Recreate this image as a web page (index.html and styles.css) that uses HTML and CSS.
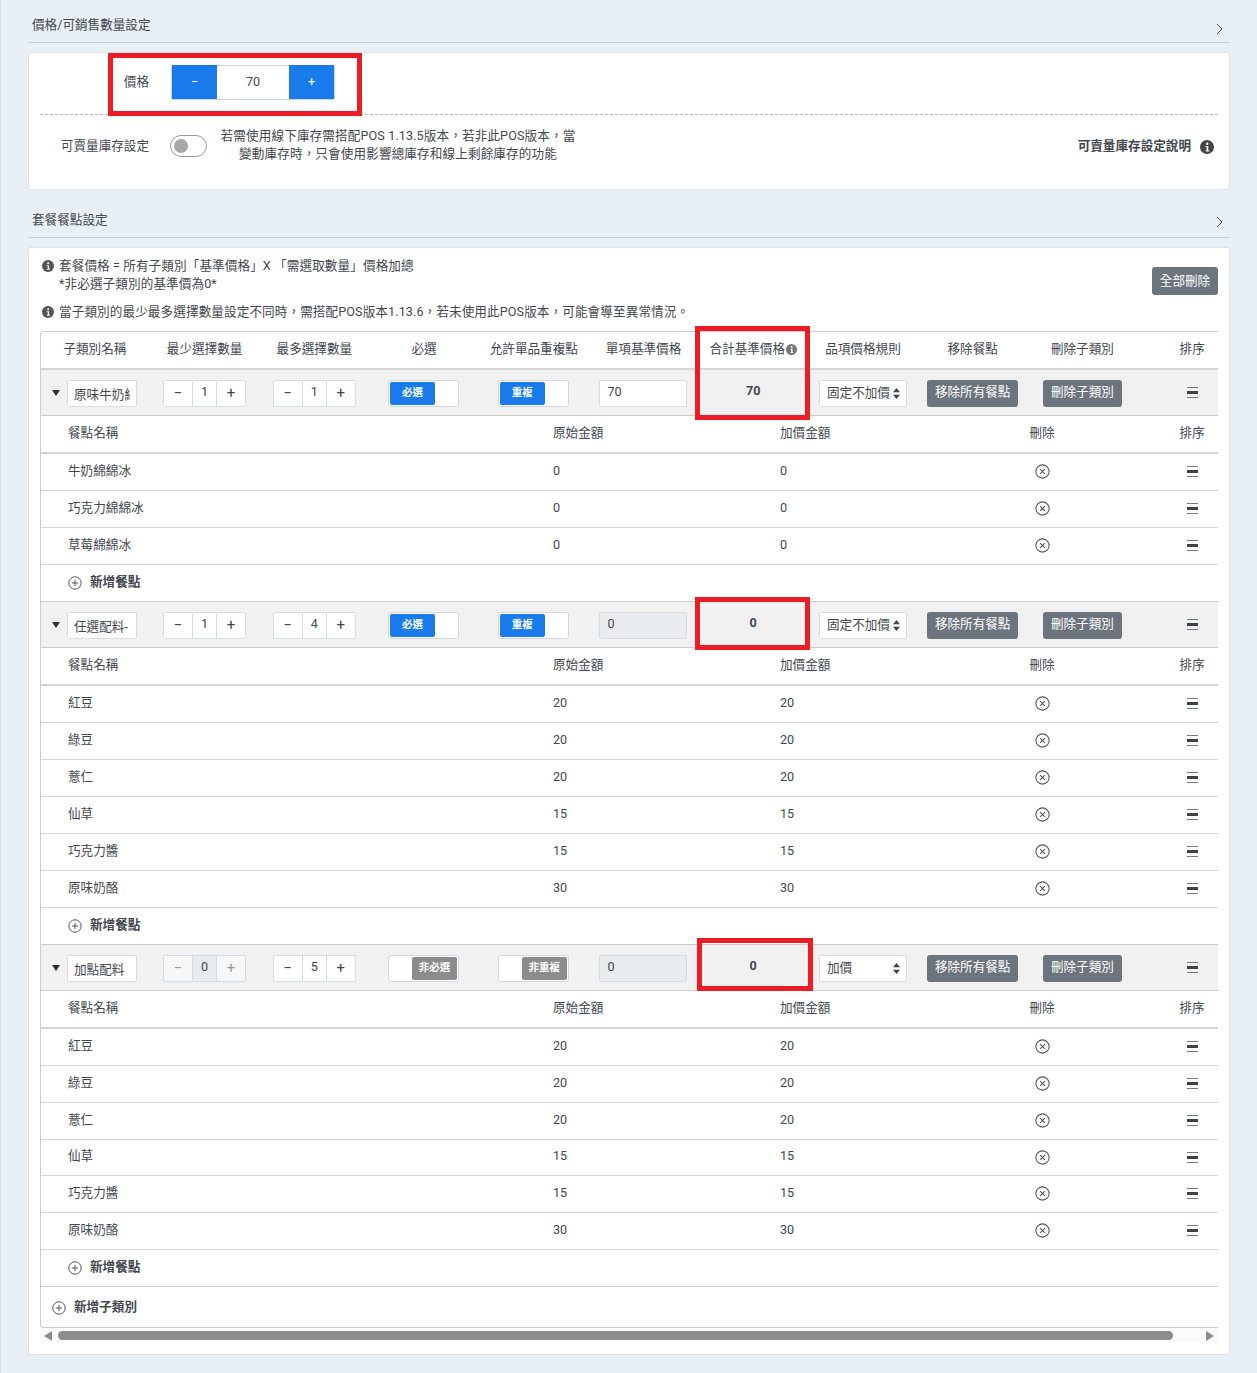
FILE: index.html
```html
<!DOCTYPE html>
<html lang="zh-Hant">
<head>
    <meta charset="UTF-8">
    <title>套餐設定</title>
    <link rel="stylesheet" href="styles.css">
</head>
<body>
    <svg class="icon-defs" aria-hidden="true">
        <symbol id="i-info" viewBox="0 0 14 14">
            <circle cx="7" cy="7" r="7" fill="currentColor"/>
            <circle cx="7.2" cy="3.7" r="1.2" fill="#fff"/>
            <path d="M5.6 6h2.7v4.4h1v1H5.6v-1h1V7h-1z" fill="#fff"/>
        </symbol>
        <symbol id="i-chevron" viewBox="0 0 7 12">
            <path d="M1 1l5 5-5 5" fill="none" stroke="currentColor" stroke-width="1"/>
        </symbol>
        <symbol id="i-remove" viewBox="0 0 14 14">
            <circle cx="7" cy="7" r="6.2" fill="none" stroke="currentColor" stroke-width="1"/>
            <path d="M4.8 4.8l4.4 4.4M9.2 4.8l-4.4 4.4" fill="none" stroke="currentColor" stroke-width="1"/>
        </symbol>
        <symbol id="i-add" viewBox="0 0 14 14">
            <circle cx="7" cy="7" r="6.2" fill="none" stroke="currentColor" stroke-width="1"/>
            <path d="M7 3.8v6.4M3.8 7h6.4" fill="none" stroke="currentColor" stroke-width="1"/>
        </symbol>
        <symbol id="i-sort" viewBox="0 0 11 11">
            <path d="M0 .5h11M0 10.5h11" fill="none" stroke="currentColor" stroke-width="1" opacity=".7"/>
            <path d="M0 4h11v3H0z" fill="currentColor"/>
        </symbol>
        <symbol id="i-updown" viewBox="0 0 7 11">
            <path d="M3.5 0L7 4.2H0zM3.5 11L0 6.8h7z" fill="currentColor"/>
        </symbol>
    </svg>

    <div class="page">
        <div class="section-head">
            <span>價格/可銷售數量設定</span>
            <svg class="chevron"><use href="#i-chevron"/></svg>
        </div>
        <div class="panel">
            <div class="price-row">
                <label class="field-label">價格</label>
                <div class="price-stepper">
                    <button>−</button>
                    <span class="price-value">70</span>
                    <button>+</button>
                </div>
            </div>
            <div class="stock-row">
                <label class="field-label">可賣量庫存設定</label>
                <span class="switch"><span class="switch-knob"></span></span>
                <p class="stock-hint">若需使用線下庫存需搭配POS 1.13.5版本，若非此POS版本，當<br>變動庫存時，只會使用影響總庫存和線上剩餘庫存的功能</p>
                <div class="stock-help">
                    <b>可賣量庫存設定說明</b>
                    <svg class="info-lg"><use href="#i-info"/></svg>
                </div>
            </div>
        </div>

        <div class="section-head second">
            <span>套餐餐點設定</span>
            <svg class="chevron"><use href="#i-chevron"/></svg>
        </div>
        <div class="panel meal-panel">
            <div class="notes-top">
                <div class="note">
                    <svg class="info-sm"><use href="#i-info"/></svg>
                    <p>套餐價格 = 所有子類別「基準價格」X 「需選取數量」價格加總<br>*非必選子類別的基準價為0*</p>
                </div>
                <button class="btn-dark">全部刪除</button>
            </div>
            <div class="note note-second">
                <svg class="info-sm"><use href="#i-info"/></svg>
                <p>當子類別的最少最多選擇數量設定不同時，需搭配POS版本1.13.6，若未使用此POS版本，可能會導至異常情況。</p>
            </div>

            <div class="table-wrap">
                <div class="table-inner">
                    <div class="head-row">
                        <span>子類別名稱</span>
                        <span>最少選擇數量</span>
                        <span>最多選擇數量</span>
                        <span>必選</span>
                        <span>允許單品重複點</span>
                        <span>單項基準價格</span>
                        <span class="head-total">合計基準價格<svg class="info-xs"><use href="#i-info"/></svg></span>
                        <span>品項價格規則</span>
                        <span>移除餐點</span>
                        <span>刪除子類別</span>
                        <span>排序</span>
                    </div>

                    <!-- 原味牛奶 -->
                    <div class="group-row">
                        <div class="group-name"><i class="caret"></i><input type="text" value="原味牛奶綿綿冰"></div>
                        <div class="stepper"><button>−</button><span>1</span><button>+</button></div>
                        <div class="stepper"><button>−</button><span>1</span><button>+</button></div>
                        <div class="pill"><span class="pill-on">必選</span></div>
                        <div class="pill"><span class="pill-on">重複</span></div>
                        <input class="base-price" type="text" value="70">
                        <b class="total">70</b>
                        <div class="rule-select"><select><option>固定不加價</option></select><svg><use href="#i-updown"/></svg></div>
                        <button class="btn-dark btn-remove">移除所有餐點</button>
                        <button class="btn-dark btn-delete">刪除子類別</button>
                        <svg class="sort"><use href="#i-sort"/></svg>
                    </div>
                    <div class="item-head"><span>餐點名稱</span><span>原始金額</span><span>加價金額</span><span class="mid">刪除</span><span></span><span class="mid">排序</span></div>
                    <div class="item-row"><span>牛奶綿綿冰</span><span>0</span><span>0</span><svg class="remove"><use href="#i-remove"/></svg><span></span><svg class="sort"><use href="#i-sort"/></svg></div>
                    <div class="item-row"><span>巧克力綿綿冰</span><span>0</span><span>0</span><svg class="remove"><use href="#i-remove"/></svg><span></span><svg class="sort"><use href="#i-sort"/></svg></div>
                    <div class="item-row"><span>草莓綿綿冰</span><span>0</span><span>0</span><svg class="remove"><use href="#i-remove"/></svg><span></span><svg class="sort"><use href="#i-sort"/></svg></div>
                    <div class="add-row"><svg class="add"><use href="#i-add"/></svg><b>新增餐點</b></div>

                    <!-- 任選配料 -->
                    <div class="group-row">
                        <div class="group-name"><i class="caret"></i><input type="text" value="任選配料-"></div>
                        <div class="stepper"><button>−</button><span>1</span><button>+</button></div>
                        <div class="stepper"><button>−</button><span>4</span><button>+</button></div>
                        <div class="pill"><span class="pill-on">必選</span></div>
                        <div class="pill"><span class="pill-on">重複</span></div>
                        <input class="base-price" type="text" value="0" disabled>
                        <b class="total">0</b>
                        <div class="rule-select"><select><option>固定不加價</option></select><svg><use href="#i-updown"/></svg></div>
                        <button class="btn-dark btn-remove">移除所有餐點</button>
                        <button class="btn-dark btn-delete">刪除子類別</button>
                        <svg class="sort"><use href="#i-sort"/></svg>
                    </div>
                    <div class="item-head"><span>餐點名稱</span><span>原始金額</span><span>加價金額</span><span class="mid">刪除</span><span></span><span class="mid">排序</span></div>
                    <div class="item-row"><span>紅豆</span><span>20</span><span>20</span><svg class="remove"><use href="#i-remove"/></svg><span></span><svg class="sort"><use href="#i-sort"/></svg></div>
                    <div class="item-row"><span>綠豆</span><span>20</span><span>20</span><svg class="remove"><use href="#i-remove"/></svg><span></span><svg class="sort"><use href="#i-sort"/></svg></div>
                    <div class="item-row"><span>薏仁</span><span>20</span><span>20</span><svg class="remove"><use href="#i-remove"/></svg><span></span><svg class="sort"><use href="#i-sort"/></svg></div>
                    <div class="item-row"><span>仙草</span><span>15</span><span>15</span><svg class="remove"><use href="#i-remove"/></svg><span></span><svg class="sort"><use href="#i-sort"/></svg></div>
                    <div class="item-row"><span>巧克力醬</span><span>15</span><span>15</span><svg class="remove"><use href="#i-remove"/></svg><span></span><svg class="sort"><use href="#i-sort"/></svg></div>
                    <div class="item-row"><span>原味奶酪</span><span>30</span><span>30</span><svg class="remove"><use href="#i-remove"/></svg><span></span><svg class="sort"><use href="#i-sort"/></svg></div>
                    <div class="add-row"><svg class="add"><use href="#i-add"/></svg><b>新增餐點</b></div>

                    <!-- 加點配料 -->
                    <div class="group-row">
                        <div class="group-name"><i class="caret"></i><input type="text" value="加點配料"></div>
                        <div class="stepper is-disabled"><button>−</button><span>0</span><button>+</button></div>
                        <div class="stepper"><button>−</button><span>5</span><button>+</button></div>
                        <div class="pill pill-off"><span class="pill-gray">非必選</span></div>
                        <div class="pill pill-off"><span class="pill-gray">非重複</span></div>
                        <input class="base-price" type="text" value="0" disabled>
                        <b class="total">0</b>
                        <div class="rule-select"><select><option>加價</option></select><svg><use href="#i-updown"/></svg></div>
                        <button class="btn-dark btn-remove">移除所有餐點</button>
                        <button class="btn-dark btn-delete">刪除子類別</button>
                        <svg class="sort"><use href="#i-sort"/></svg>
                    </div>
                    <div class="item-head"><span>餐點名稱</span><span>原始金額</span><span>加價金額</span><span class="mid">刪除</span><span></span><span class="mid">排序</span></div>
                    <div class="item-row"><span>紅豆</span><span>20</span><span>20</span><svg class="remove"><use href="#i-remove"/></svg><span></span><svg class="sort"><use href="#i-sort"/></svg></div>
                    <div class="item-row"><span>綠豆</span><span>20</span><span>20</span><svg class="remove"><use href="#i-remove"/></svg><span></span><svg class="sort"><use href="#i-sort"/></svg></div>
                    <div class="item-row"><span>薏仁</span><span>20</span><span>20</span><svg class="remove"><use href="#i-remove"/></svg><span></span><svg class="sort"><use href="#i-sort"/></svg></div>
                    <div class="item-row tight"><span>仙草</span><span>15</span><span>15</span><svg class="remove"><use href="#i-remove"/></svg><span></span><svg class="sort"><use href="#i-sort"/></svg></div>
                    <div class="item-row"><span>巧克力醬</span><span>15</span><span>15</span><svg class="remove"><use href="#i-remove"/></svg><span></span><svg class="sort"><use href="#i-sort"/></svg></div>
                    <div class="item-row"><span>原味奶酪</span><span>30</span><span>30</span><svg class="remove"><use href="#i-remove"/></svg><span></span><svg class="sort"><use href="#i-sort"/></svg></div>
                    <div class="add-row"><svg class="add"><use href="#i-add"/></svg><b>新增餐點</b></div>

                    <div class="add-group"><svg class="add"><use href="#i-add"/></svg><b>新增子類別</b></div>
                </div>
            </div>

            <div class="scrollbar">
                <i class="arrow-left"></i>
                <div class="scroll-track"><div class="scroll-thumb"></div></div>
                <i class="arrow-right"></i>
            </div>
        </div>
    </div>

    <!-- red annotation boxes -->
    <div class="mark mark-price"></div>
    <div class="mark mark-total-1"></div>
    <div class="mark mark-total-2"></div>
    <div class="mark mark-total-3"></div>
</body>
</html>
```

FILE: styles.css
```css
* {
    box-sizing: border-box;
}
body {
    margin: 0;
    background: #e8eff5;
    border-left: 1px solid #d6dce1;
    color: #43484e;
    font-family: Roboto, "Noto Sans CJK TC", sans-serif;
    font-size: 12.6px;
    line-height: 18px;
    position: relative;
    min-height: 1373px;
}
button, input, select {
    font: inherit;
    color: inherit;
}
p {
    margin: 0;
}
.icon-defs {
    position: absolute;
    width: 0;
    height: 0;
}
.page {
    padding-left: 27px;
    width: 1229px;
}

/* section titles */
.section-head {
    display: flex;
    justify-content: space-between;
    height: 43px;
    padding: 16px 7px 0 4px;
    border-bottom: 1px solid #c9d0d8;
}
.section-head.second {
    margin-top: 4px;
    height: 44px;
    padding-top: 17px;
}
.chevron {
    width: 7px;
    height: 12px;
    margin-top: 7px;
    color: #555;
}
.second .chevron {
    margin-top: 5px;
}
.panel {
    margin-top: 9px;
    background: #fff;
    border: 1px solid #dde3e8;
    border-radius: 2px;
    padding: 0 11px;
}

/* price / stock */
.price-row {
    display: flex;
    align-items: center;
    height: 62px;
    border-bottom: 1px dashed #bbb;
}
.price-row .field-label {
    margin-top: -4px;
}
.field-label {
    width: 109px;
    text-align: right;
    flex: none;
}
.price-stepper {
    display: flex;
    align-items: center;
    width: 164px;
    height: 35px;
    margin-left: 22px;
    margin-top: -3px;
    border: 1px solid #ccd3d9;
    border-radius: 2px;
}
.price-stepper button {
    width: 45px;
    height: 34px;
    border: 0;
    background: #1a7bec;
    color: #fff;
    padding: 0;
}
.price-value {
    flex: 1;
    text-align: center;
}
.stock-row {
    display: flex;
    align-items: center;
    height: 74px;
    padding-bottom: 13px;
}
.switch {
    width: 37px;
    height: 22px;
    margin-left: 21px;
    flex: none;
    border: 1px solid #999;
    border-radius: 11px;
    padding: 3px;
}
.switch-knob {
    display: block;
    width: 14px;
    height: 14px;
    border-radius: 50%;
    background: #a8a8a8;
}
.stock-hint {
    width: 358px;
    margin-left: 12px;
    margin-top: -2px;
    text-align: center;
    letter-spacing: 0.12px;
}
.stock-help {
    display: flex;
    align-items: center;
    margin-left: auto;
    padding-right: 4px;
    gap: 9px;
}
.info-lg {
    width: 14px;
    height: 14px;
    margin-top: 3px;
    color: #444;
}

/* notes */
.meal-panel {
    padding-bottom: 12px;
}
.notes-top {
    display: flex;
    justify-content: space-between;
    padding-top: 9px;
}
.note {
    display: flex;
    gap: 5px;
    padding-left: 2px;
}
.note p {
    letter-spacing: 0.1px;
}
.info-sm {
    width: 12px;
    height: 12px;
    margin-top: 3px;
    flex: none;
    color: #555;
}
.note-second {
    margin-top: 8px;
}
.btn-dark {
    border: 0;
    border-radius: 3px;
    background: #6c757d;
    color: #fff;
    padding: 0;
    text-align: center;
}
.notes-top .btn-dark {
    width: 66px;
    height: 28px;
    margin-top: 10px;
}

/* table */
.table-wrap {
    width: 1178px;
    margin-top: 10px;
    overflow: hidden;
    border: 1px solid #ccc;
    border-right: 0;
    border-radius: 4px 0 0 4px;
}
.table-inner {
    width: 1207px;
    margin-left: -1px;
}
.head-row, .group-row {
    display: grid;
    grid-template-columns: repeat(11, 1fr);
    justify-items: center;
    align-items: center;
}
.head-row {
    height: 38px;
    border-bottom: 2px solid #d5d5d5;
    padding-bottom: 3px;
}
.head-total {
    display: flex;
    align-items: center;
    gap: 1px;
}
.info-xs {
    width: 11px;
    height: 11px;
    color: #777;
    margin-top: 2px;
}
.group-row {
    height: 46px;
    background: #f1f1f1;
    border-bottom: 1px solid #ccc;
}
.group-name {
    display: flex;
    align-items: center;
    justify-self: start;
    padding-left: 12px;
}
.caret {
    width: 0;
    height: 0;
    border: 4.5px solid transparent;
    border-top: 6px solid #333;
    border-bottom: 0;
    margin-right: 7px;
}
.group-name input {
    width: 70px;
    height: 27px;
    border: 1px solid #d9dde1;
    border-radius: 2px;
    padding: 0 6px;
    background: #fff;
    margin-top: 1px;
}
.stepper {
    display: flex;
    width: 83px;
    height: 27px;
    background: #fff;
    border: 1px solid #d9dde1;
    border-radius: 2px;
    margin-top: 1px;
}
.stepper button {
    width: 28px;
    border: 0;
    background: transparent;
    padding: 0;
    font-size: 15px;
    line-height: 1;
}
.stepper span {
    flex: 1;
    text-align: center;
    border: 1px solid #d9dde1;
    border-width: 0 1px;
    line-height: 21px;
}
.stepper.is-disabled {
    background: #f6f7f8;
}
.stepper.is-disabled button {
    color: #999;
}
.stepper.is-disabled span {
    background: #e9ecef;
}
.pill {
    width: 71px;
    height: 27px;
    background: #fff;
    border: 1px solid #d4d8dc;
    border-radius: 3px;
    padding: 1px;
    margin-top: 1px;
    margin-left: -1px;
}
.pill-on, .pill-gray {
    display: block;
    width: 45px;
    height: 23px;
    border-radius: 2px;
    color: #fff;
    font-size: 10.5px;
    font-weight: 700;
    text-align: center;
    line-height: 22px;
}
.pill-on {
    background: #1a7bec;
}
.pill-gray {
    background: #8c8c8c;
    margin-left: 22px;
}
.base-price {
    width: 88px;
    height: 27px;
    border: 1px solid #d9dde1;
    border-radius: 2px;
    padding: 0 7px 3px;
    background: #fff;
    margin-top: 1px;
}
.base-price:disabled {
    background: #e9ecef;
}
.total {
    margin-top: -4px;
}
.rule-select {
    position: relative;
    width: 88px;
    height: 27px;
    margin-top: 1px;
}
.rule-select select {
    width: 100%;
    height: 100%;
    appearance: none;
    background: #fff;
    border: 1px solid #d9dde1;
    border-radius: 2px;
    padding: 0 7px;
}
.rule-select svg {
    position: absolute;
    right: 7px;
    top: 8px;
    width: 7px;
    height: 11px;
    color: #444;
}
.group-row .btn-dark {
    height: 27px;
    margin-top: 1px;
    padding-bottom: 2px;
}
.btn-remove {
    width: 91px;
}
.btn-delete {
    width: 79px;
}
.sort {
    width: 11px;
    height: 11px;
    color: #3c4248;
}

/* items */
.item-head, .item-row {
    display: grid;
    grid-template-columns: 485px 227px 207px 110px 40px 110px;
    align-items: center;
    padding-left: 28px;
}
.item-head {
    height: 38px;
    border-bottom: 2px solid #d5d5d5;
    padding-bottom: 3px;
}
.item-row {
    height: 37px;
    border-bottom: 1px solid #d5d5d5;
    padding-bottom: 3px;
}
.item-row.tight {
    height: 36px;
}
.mid {
    text-align: center;
}
.item-row .sort, .item-row .remove {
    justify-self: center;
    margin-top: 2px;
}
.remove {
    width: 15px;
    height: 15px;
    color: #555;
}
.add-row, .add-group {
    display: flex;
    align-items: center;
    gap: 8px;
    border-bottom: 1px solid #ccc;
}
.add-row {
    height: 37px;
    padding-left: 28px;
    padding-bottom: 2px;
}
.add-group {
    height: 40px;
    padding-left: 12px;
    border-bottom: 0;
}
.add {
    width: 14px;
    height: 14px;
    color: #555;
    margin-top: 2px;
}

/* scrollbar drawn as in the capture */
.scrollbar {
    display: flex;
    align-items: center;
    width: 1178px;
    height: 13px;
    margin-top: 1px;
    background: #fbfbfb;
    padding: 0 4px;
}
.arrow-left, .arrow-right {
    width: 0;
    height: 0;
    border: 5px solid transparent;
    flex: none;
}
.arrow-left {
    border-left: 0;
    border-right: 8px solid #8c8c8c;
}
.arrow-right {
    border-right: 0;
    border-left: 8px solid #8c8c8c;
}
.scroll-track {
    flex: 1;
    padding: 0 33px 0 6px;
}
.scroll-thumb {
    height: 9px;
    border-radius: 5px;
    background: #8c8c8c;
}

/* annotations */
.mark {
    position: absolute;
    border: 5px solid #ed1c24;
    pointer-events: none;
}
.mark-price {
    left: 107px;
    top: 53px;
    width: 254px;
    height: 63px;
}
.mark-total-1 {
    left: 694px;
    top: 326px;
    width: 115px;
    height: 94px;
}
.mark-total-2 {
    left: 694px;
    top: 597px;
    width: 115px;
    height: 53px;
}
.mark-total-3 {
    left: 696px;
    top: 938px;
    width: 116px;
    height: 53px;
}
```
